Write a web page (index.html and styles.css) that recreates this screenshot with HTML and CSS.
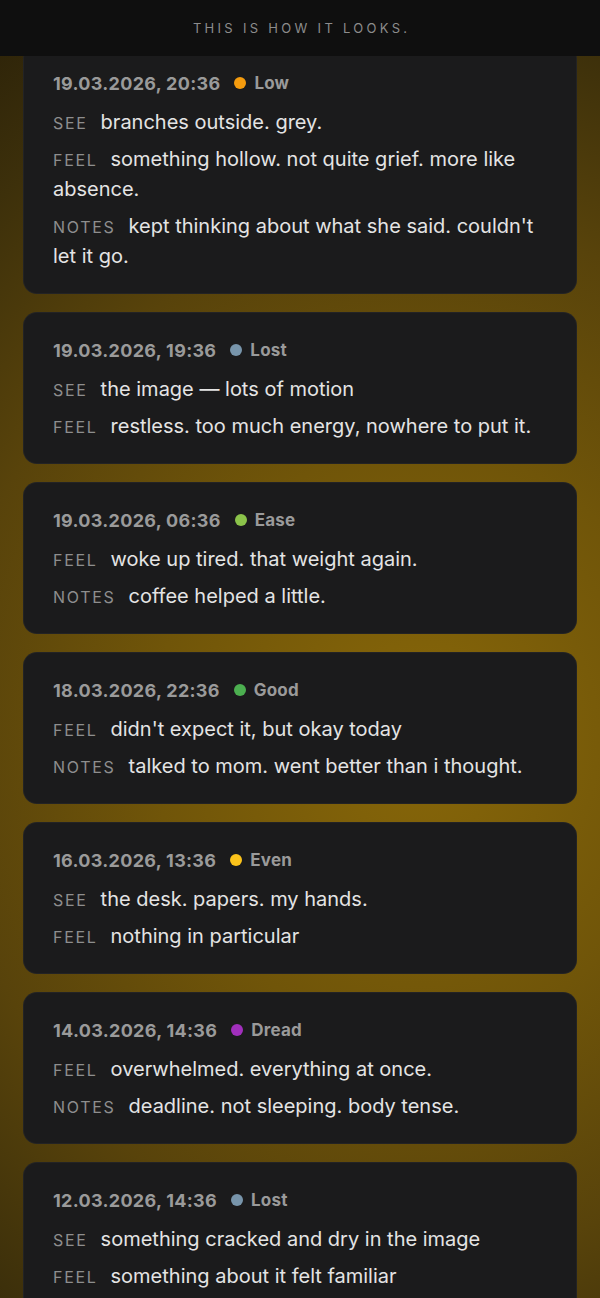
FILE: index.html
```html
<!DOCTYPE html>
<html lang="en">
<head>
<meta charset="utf-8">
<title>This is how it looks.</title>
<link rel="stylesheet" href="styles.css">
</head>
<body>
<header class="topbar"><span class="topbar-title">THIS IS HOW IT LOOKS.</span></header>
<main class="feed">
  <article class="entry">
    <div class="entry-head"><span class="entry-date">19.03.2026, 20:36</span><span class="mood"><span class="dot dot-low"></span>Low</span></div>
    <p class="row"><span class="label">SEE</span>branches outside. grey.</p>
    <p class="row"><span class="label">FEEL</span>something hollow. not quite grief. more like absence.</p>
    <p class="row"><span class="label">NOTES</span>kept thinking about what she said. couldn't let it go.</p>
  </article>
  <article class="entry">
    <div class="entry-head"><span class="entry-date">19.03.2026, 19:36</span><span class="mood"><span class="dot dot-lost"></span>Lost</span></div>
    <p class="row"><span class="label">SEE</span>the image — lots of motion</p>
    <p class="row"><span class="label">FEEL</span>restless. too much energy, nowhere to put it.</p>
  </article>
  <article class="entry">
    <div class="entry-head"><span class="entry-date">19.03.2026, 06:36</span><span class="mood"><span class="dot dot-ease"></span>Ease</span></div>
    <p class="row"><span class="label">FEEL</span>woke up tired. that weight again.</p>
    <p class="row"><span class="label">NOTES</span>coffee helped a little.</p>
  </article>
  <article class="entry">
    <div class="entry-head"><span class="entry-date">18.03.2026, 22:36</span><span class="mood"><span class="dot dot-good"></span>Good</span></div>
    <p class="row"><span class="label">FEEL</span>didn't expect it, but okay today</p>
    <p class="row"><span class="label">NOTES</span>talked to mom. went better than i thought.</p>
  </article>
  <article class="entry">
    <div class="entry-head"><span class="entry-date">16.03.2026, 13:36</span><span class="mood"><span class="dot dot-even"></span>Even</span></div>
    <p class="row"><span class="label">SEE</span>the desk. papers. my hands.</p>
    <p class="row"><span class="label">FEEL</span>nothing in particular</p>
  </article>
  <article class="entry">
    <div class="entry-head"><span class="entry-date">14.03.2026, 14:36</span><span class="mood"><span class="dot dot-dread"></span>Dread</span></div>
    <p class="row"><span class="label">FEEL</span>overwhelmed. everything at once.</p>
    <p class="row"><span class="label">NOTES</span>deadline. not sleeping. body tense.</p>
  </article>
  <article class="entry">
    <div class="entry-head"><span class="entry-date">12.03.2026, 14:36</span><span class="mood"><span class="dot dot-lost"></span>Lost</span></div>
    <p class="row"><span class="label">SEE</span>something cracked and dry in the image</p>
    <p class="row"><span class="label">FEEL</span>something about it felt familiar</p>
  </article>
</main>
</body>
</html>
```

FILE: styles.css
```css
html, body {
  margin: 0;
  padding: 0;
}

body {
  font-family: Inter, "Liberation Sans", sans-serif;
  min-height: 1298px;
  background-color: #3a2d0a;
  background-image:
    radial-gradient(ellipse 760px 840px at 420px 740px, #886709 0%, #705509 35%, #58430b 62%, #3d300b 85%, #2e2409 100%);
  background-repeat: no-repeat;
  color: #e2e2e2;
}

.topbar {
  position: fixed;
  top: 0;
  left: 0;
  right: 0;
  height: 56px;
  background: #0f0f0f;
  display: flex;
  align-items: center;
  justify-content: center;
  z-index: 10;
}

.topbar-title {
  font-size: 13px;
  letter-spacing: 3.3px;
  color: #8c8c8c;
  padding-left: 3.3px;
}

.feed {
  display: flex;
  flex-direction: column;
  gap: 18px;
  padding: 45px 23px 40px;
}

.entry {
  background: #1b1b1c;
  border: 1px solid rgba(255, 255, 255, 0.035);
  border-radius: 14px;
  padding: 25px 29px 22px;
}

.entry-head {
  display: flex;
  align-items: center;
  height: 24px;
  margin-bottom: 12px;
}

.entry-date {
  font-size: 18px;
  font-weight: 700;
  letter-spacing: 0.3px;
  color: #9a9a9a;
}

.mood {
  display: flex;
  align-items: center;
  margin-left: 14px;
  font-size: 17px;
  font-weight: 700;
  letter-spacing: 0.2px;
  color: #9a9a9a;
}

.dot {
  width: 12px;
  height: 12px;
  border-radius: 50%;
  margin-right: 8px;
}

.dot-low { background: #f59c0e; }
.dot-lost { background: #7895ab; }
.dot-ease { background: #8bc34a; }
.dot-good { background: #4caf50; }
.dot-even { background: #fbc31b; }
.dot-dread { background: #a12fbc; }

.row {
  margin: 0 0 7px;
  font-size: 20px;
  line-height: 30px;
  color: #e4e4e4;
}

.row:last-child {
  margin-bottom: 0;
}

.label {
  line-height: 1;
  font-size: 16px;
  letter-spacing: 1.7px;
  color: #8e8e8e;
  margin-right: 13px;
}
```
